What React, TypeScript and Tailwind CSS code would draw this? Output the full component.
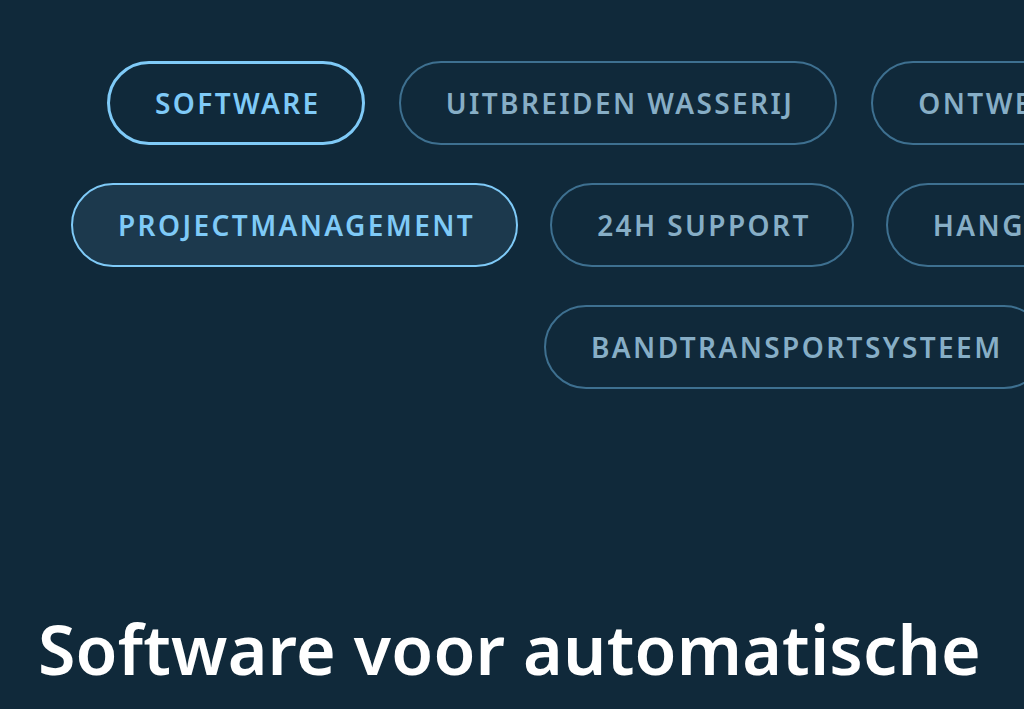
import React from "react";

const font = { fontFamily: '"Noto Sans", "Open Sans", sans-serif' };

function Pill({ label, variant }: { label: string; variant?: "active" | "selected" }) {
  const base =
    "shrink-0 h-[84px] rounded-full flex items-center justify-center pl-[45px] pr-[41px] text-[28px] font-semibold tracking-[2.4px] whitespace-nowrap";
  if (variant === "active")
    return <div className={`${base} border-[3px] border-[#7fcaf7] text-[#7fcaf7]`}>{label}</div>;
  if (variant === "selected")
    return (
      <div className={`${base} border-2 border-[#7fcaf7] bg-[#1c394d] text-[#7fcaf7]`}>{label}</div>
    );
  return <div className={`${base} border-2 border-[#3e7090] text-[#87aec6]`}>{label}</div>;
}

export default function App() {
  return (
    <div className="w-[1024px] h-[709px] overflow-hidden bg-[#10293a]" style={font}>
      <div className="flex flex-col gap-[38px] pt-[61px]">
        <div className="flex gap-[34px] pl-[107px]">
          <Pill label="SOFTWARE" variant="active" />
          <Pill label="UITBREIDEN WASSERIJ" />
          <Pill label="ONTWERP" />
        </div>
        <div className="flex gap-[32px] pl-[71px]">
          <Pill label="PROJECTMANAGEMENT" variant="selected" />
          <Pill label="24H SUPPORT" />
          <Pill label="HANGENDE TRANSPORTSYSTEMEN" />
        </div>
        <div className="flex gap-[35px] pl-[544px]">
          <Pill label="BANDTRANSPORTSYSTEEM" />
        </div>
      </div>
      <h1 className="mt-[219px] pl-[38px] text-[68px] font-semibold leading-[1.2] tracking-[0.2px] text-white whitespace-nowrap">
        Software voor automatische
      </h1>
    </div>
  );
}
